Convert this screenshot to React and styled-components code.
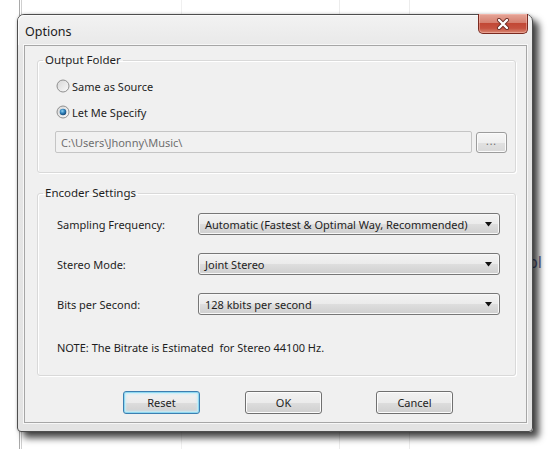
import React from "react";
import styled, { createGlobalStyle } from "styled-components";

const Global = createGlobalStyle`
  html, body { margin: 0; padding: 0; background: #fff; }
  body { font-family: "Noto Sans", "Open Sans", sans-serif; font-size: 11px; color: #1e1e1e; }
  * { box-sizing: border-box; }
`;

const Desktop = styled.div`
  position: relative;
  width: 550px;
  height: 449px;
  overflow: hidden;
  padding: 14px 0 0 17px;
  background-color: #fff;
  background-image:
    linear-gradient(90deg, transparent 19px, #a9a9a9 19px, #a9a9a9 20px, transparent 20px),
    linear-gradient(90deg, transparent 21px, #cfcfcf 21px, #cfcfcf 22px, transparent 22px),
    linear-gradient(90deg, transparent 181px, #f0f0f0 181px, #f0f0f0 182px, transparent 182px),
    linear-gradient(90deg, transparent 339px, #ececec 339px, #ececec 340px, transparent 340px),
    linear-gradient(90deg, transparent 409px, #ececec 409px, #ececec 410px, transparent 410px);
`;

const BgText = styled.span`
  position: absolute;
  left: 528px;
  top: 251px;
  font-size: 16px;
  color: #5f6f9f;
  z-index: 0;
`;

const Window = styled.div`
  position: relative;
  z-index: 1;
  width: 516px;
  height: 418px;
  display: flex;
  flex-direction: column;
  border: 1px solid #4e4e4e;
  border-radius: 7px 7px 4px 4px;
  background: linear-gradient(#f2f2f2, #e6e6e6 40px, #e3e3e3);
  box-shadow: 0 0 3px rgba(0, 0, 0, 0.25), 6px 6px 7px rgba(0, 0, 0, 0.72);
`;

const TitleBar = styled.div`
  position: relative;
  height: 30px;
  flex: none;
  display: flex;
  align-items: center;
  padding: 2px 0 0 7px;
  font-size: 12.5px;
  color: #1b1b1b;
  border-radius: 6px 6px 0 0;
  box-shadow: inset 1px 1px 0 #fbfbfb;
`;

const CloseButton = styled.div`
  position: absolute;
  top: -1px;
  right: 4px;
  width: 50px;
  height: 20px;
  border: 1px solid #7a2a20;
  border-top: none;
  border-radius: 0 0 5px 5px;
  background: linear-gradient(#e5a698 0%, #d68070 45%, #c24835 50%, #c65240 75%, #d98a74 100%);
  box-shadow: inset 0 0 0 1px rgba(255, 200, 190, 0.45);
  display: flex;
  align-items: center;
  justify-content: center;
`;

const Client = styled.div`
  flex: 1;
  margin: 0 5px 8px 6px;
  border: 1px solid #a6a6a6;
  background: #f0f0f0;
  box-shadow: 0 0 0 1px #f7f7f7;
  display: flex;
  flex-direction: column;
  padding: 0 10px 0 12px;
`;

const Group = styled.fieldset`
  margin: ${(p) => p.$top}px 0 0 0;
  padding: 0;
  border: 1px solid #d9d9d9;
  border-radius: 3px;
  box-shadow: inset 1px 1px 0 #fff, 1px 1px 0 #fff;
  min-width: 0;
`;

const GroupBody = styled.div`
  padding: ${(p) => p.$pt}px ${(p) => p.$pr}px ${(p) => p.$pb}px ${(p) => p.$pl}px;
`;

const Legend = styled.legend`
  margin-left: 5px;
  padding: 0 2px;
  line-height: 16px;
  height: 16px;
  font-size: 11.5px;
  color: #1e1e1e;
`;

const RadioRow = styled.label`
  display: flex;
  align-items: center;
  height: 18px;
  margin: ${(p) => p.$mt || 0}px 0 0 1px;
  gap: 2px;
`;

const PathRow = styled.div`
  display: flex;
  align-items: center;
  gap: 4px;
  margin-top: 10px;
`;

const PathBox = styled.div`
  flex: none;
  width: 417px;
  height: 22px;
  border: 1px solid #c5c5c5;
  border-radius: 2px;
  background: #f1f1f1;
  color: #6f6f6f;
  display: flex;
  align-items: center;
  padding-left: 5px;
`;

const BrowseButton = styled.div`
  flex: none;
  width: 31px;
  height: 21px;
  border: 1px solid #9c9c9c;
  border-radius: 3px;
  background: linear-gradient(#f6f6f6 0%, #efefef 50%, #e1e1e1 51%, #d9d9d9 100%);
  box-shadow: inset 0 0 0 1px #fbfbfb;
  color: #6a6a6a;
  font-size: 10px;
  display: flex;
  align-items: center;
  justify-content: center;
  letter-spacing: 1px;
  padding-bottom: 3px;
`;

const SettingRow = styled.div`
  display: grid;
  grid-template-columns: 141px 302px;
  align-items: center;
  margin-top: ${(p) => p.$mt}px;
`;

const Label = styled.span`
  color: #1e1e1e;
`;

const Select = styled.div`
  height: 22px;
  border: 1px solid #777;
  border-radius: 3px;
  background: linear-gradient(#f3f3f3 0%, #ebebeb 50%, #dedede 51%, #cfcfcf 100%);
  box-shadow: inset 0 0 0 1px #f8f8f8;
  display: flex;
  align-items: center;
  justify-content: space-between;
  padding: 0 6px 0 6px;
  color: #1e1e1e;
`;

const Note = styled.div`
  margin-top: 25px;
  height: 16px;
  line-height: 16px;
`;

const ButtonRow = styled.div`
  display: flex;
  margin-top: 15px;
  padding-left: 86px;
`;

const Button = styled.div`
  width: 77px;
  height: 23px;
  margin-left: ${(p) => p.$ml || 0}px;
  border: 1px solid ${(p) => (p.$default ? "#3c7fb1" : "#707070")};
  border-radius: 3px;
  background: linear-gradient(#f2f2f2 0%, #ebebeb 50%, #dddddd 51%, #cfcfcf 100%);
  box-shadow: ${(p) =>
    p.$default ? "inset 0 0 0 1px #8fd8f0, inset 0 0 2px 2px #c6ecf8" : "inset 0 0 0 1px #fcfcfc"};
  display: flex;
  align-items: center;
  justify-content: center;
  color: #1e1e1e;
`;

const Radio = ({ checked }) => (
  <svg width="14" height="14" viewBox="0 0 14 14">
    <defs>
      <linearGradient id={checked ? "rg1" : "rg0"} x1="0" y1="0" x2="1" y2="1">
        <stop offset="0" stopColor="#d6d6d6" />
        <stop offset="1" stopColor="#fafafa" />
      </linearGradient>
      <radialGradient id="dot" cx="0.4" cy="0.35" r="0.7">
        <stop offset="0" stopColor="#8fd3f5" />
        <stop offset="0.5" stopColor="#2d7fb8" />
        <stop offset="1" stopColor="#17406a" />
      </radialGradient>
    </defs>
    <circle cx="7" cy="7" r="6" fill={`url(#${checked ? "rg1" : "rg0"})`} stroke="#8f8f8f" strokeWidth="1" />
    {checked && <circle cx="7" cy="7" r="3.3" fill="url(#dot)" />}
  </svg>
);

const Arrow = () => (
  <svg width="8" height="5" viewBox="0 0 8 5">
    <path d="M0 0 H7 L3.5 4.5 Z" fill="#111" />
  </svg>
);

const CloseX = () => (
  <svg width="14" height="12" viewBox="0 0 14 12">
    <path d="M3 2 L11 10 M11 2 L3 10" stroke="#6a2a22" strokeWidth="4" strokeLinecap="round" />
    <path d="M3 2 L11 10 M11 2 L3 10" stroke="#fff" strokeWidth="2.4" strokeLinecap="round" />
  </svg>
);

export default function App() {
  return (
    <>
      <Global />
      <Desktop>
        <BgText>bl</BgText>
        <Window>
          <TitleBar>
            Options
            <CloseButton>
              <CloseX />
            </CloseButton>
          </TitleBar>
          <Client>
            <Group $top={6}>
              <Legend>Output Folder</Legend>
              <GroupBody $pt={9} $pr={6} $pb={19} $pl={17}>
                <RadioRow>
                  <Radio />
                  <span>Same as Source</span>
                </RadioRow>
                <RadioRow $mt={8}>
                  <Radio checked />
                  <span>Let Me Specify</span>
                </RadioRow>
                <PathRow>
                  <PathBox>C:\Users\Jhonny\Music\</PathBox>
                  <BrowseButton>...</BrowseButton>
                </PathRow>
              </GroupBody>
            </Group>
            <Group $top={12}>
              <Legend>Encoder Settings</Legend>
              <GroupBody $pt={12} $pr={14} $pb={19} $pl={19}>
                <SettingRow $mt={0}>
                  <Label>Sampling Frequency:</Label>
                  <Select>
                    <span>Automatic (Fastest &amp; Optimal Way, Recommended)</span>
                    <Arrow />
                  </Select>
                </SettingRow>
                <SettingRow $mt={18}>
                  <Label>Stereo Mode:</Label>
                  <Select>
                    <span>Joint Stereo</span>
                    <Arrow />
                  </Select>
                </SettingRow>
                <SettingRow $mt={18}>
                  <Label>Bits per Second:</Label>
                  <Select>
                    <span>128 kbits per second</span>
                    <Arrow />
                  </Select>
                </SettingRow>
                <Note>NOTE: The Bitrate is Estimated&nbsp; for Stereo 44100 Hz.</Note>
              </GroupBody>
            </Group>
            <ButtonRow>
              <Button $default>Reset</Button>
              <Button $ml={45}>OK</Button>
              <Button $ml={54}>Cancel</Button>
            </ButtonRow>
          </Client>
        </Window>
      </Desktop>
    </>
  );
}
